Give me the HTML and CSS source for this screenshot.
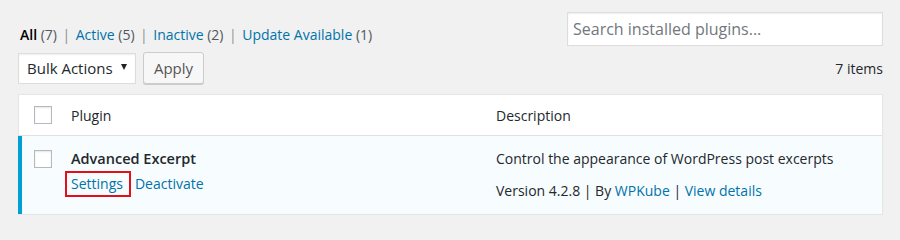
FILE: index.html
```html
<!DOCTYPE html>
<html>
<head>
<meta charset="utf-8">
<link rel="stylesheet" href="styles.css">
</head>
<body>
<div class="wrap">
  <div class="top">
    <ul class="filters">
      <li><span class="current">All</span> <span class="count">(7)</span></li>
      <li class="sep">|</li>
      <li><a href="#">Active</a> <span class="count">(5)</span></li>
      <li class="sep">|</li>
      <li><a href="#">Inactive</a> <span class="count">(2)</span></li>
      <li class="sep">|</li>
      <li><a href="#">Update Available</a> <span class="count">(1)</span></li>
    </ul>
    <input class="search" type="search" placeholder="Search installed plugins...">
  </div>
  <div class="tablenav">
    <div class="actions">
      <div class="select">Bulk Actions <span class="arrow"></span></div>
      <button class="button" type="button">Apply</button>
    </div>
    <span class="items">7 items</span>
  </div>
  <div class="list">
    <div class="head">
      <div class="cb"><span class="box"></span></div>
      <div class="name">Plugin</div>
      <div class="desc">Description</div>
    </div>
    <div class="row active">
      <div class="cb"><span class="box"></span></div>
      <div class="name">
        <div class="title">Advanced Excerpt</div>
        <div class="row-actions"><a href="#" class="hl">Settings</a><a href="#">Deactivate</a></div>
      </div>
      <div class="desc">
        <div class="desc-text">Control the appearance of WordPress post excerpts</div>
        <div class="meta">Version 4.2.8 | By <a href="#">WPKube</a> | <a href="#">View details</a></div>
      </div>
    </div>
  </div>
</div>
</body>
</html>
```

FILE: styles.css
```css
html, body {
  margin: 0;
  padding: 0;
  background: #f1f1f1;
}
body {
  font-family: "Open Sans", "Noto Sans", sans-serif;
  color: #23282d;
  font-size: 14px;
}
a {
  color: #0073aa;
  text-decoration: none;
}
.wrap {
  margin-left: 18px;
  width: 865px;
  padding-top: 12px;
}
.top {
  display: flex;
  justify-content: space-between;
  align-items: flex-start;
  height: 34px;
}
.filters {
  list-style: none;
  margin: 0;
  padding: 13px 0 0 2px;
  display: flex;
  font-size: 14px;
  line-height: 20px;
  color: #50575e;
}
.filters li {
  margin: 0;
}
.filters .sep {
  color: #8c8f94;
  margin: 0 5.5px;
}
.filters .current {
  color: #000;
  font-weight: 600;
}
.search {
  box-sizing: border-box;
  width: 316px;
  height: 34px;
  margin: 0;
  border: 1px solid #ddd;
  background: #fff;
  box-shadow: inset 0 1px 2px rgba(0,0,0,.07);
  font-family: inherit;
  font-size: 16px;
  padding: 0 5px;
  outline: none;
}
.search::placeholder {
  color: #72777c;
}
.tablenav {
  margin-top: 6px;
  display: flex;
  justify-content: space-between;
  align-items: center;
  height: 32px;
}
.actions {
  display: flex;
  align-items: center;
  gap: 7px;
}
.select {
  box-sizing: border-box;
  width: 118px;
  height: 31px;
  border: 1px solid #ddd;
  background: #fff;
  box-shadow: inset 0 1px 2px rgba(0,0,0,.07);
  display: flex;
  align-items: center;
  justify-content: space-between;
  padding: 0 8px 0 8px;
  font-size: 15px;
  color: #23282d;
}
.arrow {
  width: 0;
  height: 0;
  border-left: 3.5px solid transparent;
  border-right: 3.5px solid transparent;
  border-top: 6px solid #222;
  margin-bottom: 3px;
}
.button {
  box-sizing: border-box;
  height: 32px;
  width: 61px;
  border: 1px solid #ccc;
  border-radius: 3px;
  background: #f7f7f7;
  box-shadow: 0 1px 0 #ccc;
  font-family: inherit;
  font-size: 15px;
  color: #555;
  padding: 0;
}
.items {
  font-size: 14px;
  color: #23282d;
}
.list {
  margin-top: 10px;
  background: #fff;
  border: 1px solid #e5e5e5;
  border-left: none;
  box-shadow: 0 1px 1px rgba(0,0,0,.04);
}
.head {
  display: flex;
  align-items: center;
  height: 40px;
  border-bottom: 1px solid #e1e1e1;
  border-left: 1px solid #e5e5e5;
}
.box {
  display: block;
  box-sizing: border-box;
  width: 18px;
  height: 18px;
  border: 1px solid #b4b9be;
  background: #fff;
  box-shadow: inset 0 1px 2px rgba(0,0,0,.1);
}
.head .cb {
  width: 42px;
  box-sizing: border-box;
  padding-left: 15px;
}
.name {
  width: 425px;
  box-sizing: border-box;
  padding-left: 10px;
}
.desc {
  flex: 1;
  padding-left: 10px;
}
.head .name, .head .desc {
  padding-top: 1px;
}
.row {
  display: flex;
  align-items: flex-start;
  height: 78px;
  box-sizing: border-box;
  padding-top: 14px;
}
.row.active {
  background: #f7fcfe;
  border-left: 4px solid #00a0d2;
}
.row .cb {
  width: 39px;
  box-sizing: border-box;
  padding-left: 12px;
}
.row .name, .row .desc {
  margin-top: -2px;
}
.title {
  font-weight: 600;
  font-size: 14.5px;
  line-height: 22px;
  color: #23282d;
}
.row-actions {
  margin-top: 1px;
  display: flex;
  align-items: center;
  margin-left: -6px;
}
.row-actions a {
  font-size: 14px;
  line-height: 20px;
}
.row-actions .hl {
  border: 2px solid #e3101a;
  padding: 1px 6px 1px 4px;
  margin-right: 4px;
}
.desc-text {
  line-height: 22px;
}
.meta {
  margin-top: 11px;
  line-height: 20px;
}
```
